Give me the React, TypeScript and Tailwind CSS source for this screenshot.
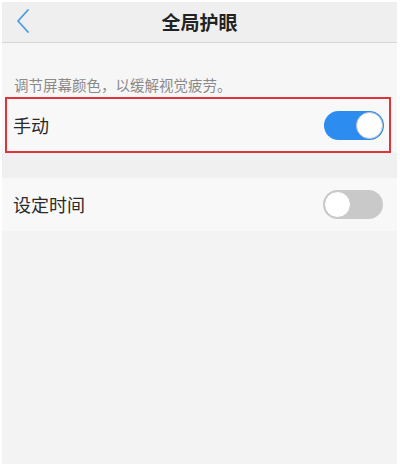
import React from 'react';

const Toggle = ({ on }: { on: boolean }) => (
    <div className={`w-[60px] h-[29px] rounded-full flex items-center px-[1px] ${on ? 'bg-[#2d8cf0] justify-end' : 'bg-[#c9c9c9] justify-start'}`}>
        <div className="w-[27px] h-[27px] rounded-full bg-white border border-[#c4c4c4]" />
    </div>
);

export default function App() {
    return (
        <div className="w-[400px] h-[467px] bg-white pt-[2px] pl-[2px] pr-[3px] pb-[3px]" style={{ fontFamily: '"Noto Sans CJK SC", "Noto Sans", sans-serif' }}>
            <div className="h-full bg-[#f3f3f3] flex flex-col">
                {/* header */}
                <div className="h-[41px] bg-[#efefef] border-b border-[#d6d6d6] flex items-center relative shrink-0">
                    <svg className="ml-[14px] mb-[2px]" width="14" height="26" viewBox="0 0 14 26" fill="none">
                        <path d="M12 2 L2 13 L12 24" stroke="#4a9be0" strokeWidth="1.8" strokeLinecap="round" strokeLinejoin="round" />
                    </svg>
                    <div className="absolute inset-0 flex items-center justify-center text-[19px] font-bold text-[#222] pointer-events-none">全局护眼</div>
                </div>

                {/* description */}
                <div className="h-[54px] bg-[#f6f6f6] flex items-end pl-[12px] pb-[1px] text-[14.5px] text-[#8a8a8a] shrink-0">
                    调节屏幕颜色，以缓解视觉疲劳。
                </div>

                {/* manual row */}
                <div className="h-[56px] bg-[#f8f8f8] pl-[3px] pr-[6px] shrink-0">
                    <div className="h-full border-2 border-[#e2333b] flex items-center justify-between pl-[6px] pr-[5px]">
                        <span className="text-[18px] text-[#2a2a2a]">手动</span>
                        <Toggle on />
                    </div>
                </div>

                <div className="h-[25px] bg-[#f0f0f0] shrink-0" />

                {/* schedule row */}
                <div className="h-[53px] bg-[#f8f8f8] flex items-center justify-between pl-[11px] pr-[14px] shrink-0">
                    <span className="text-[18px] text-[#2a2a2a]">设定时间</span>
                    <Toggle on={false} />
                </div>

                <div className="flex-1 bg-[#f3f3f3]" />
            </div>
        </div>
    );
}
